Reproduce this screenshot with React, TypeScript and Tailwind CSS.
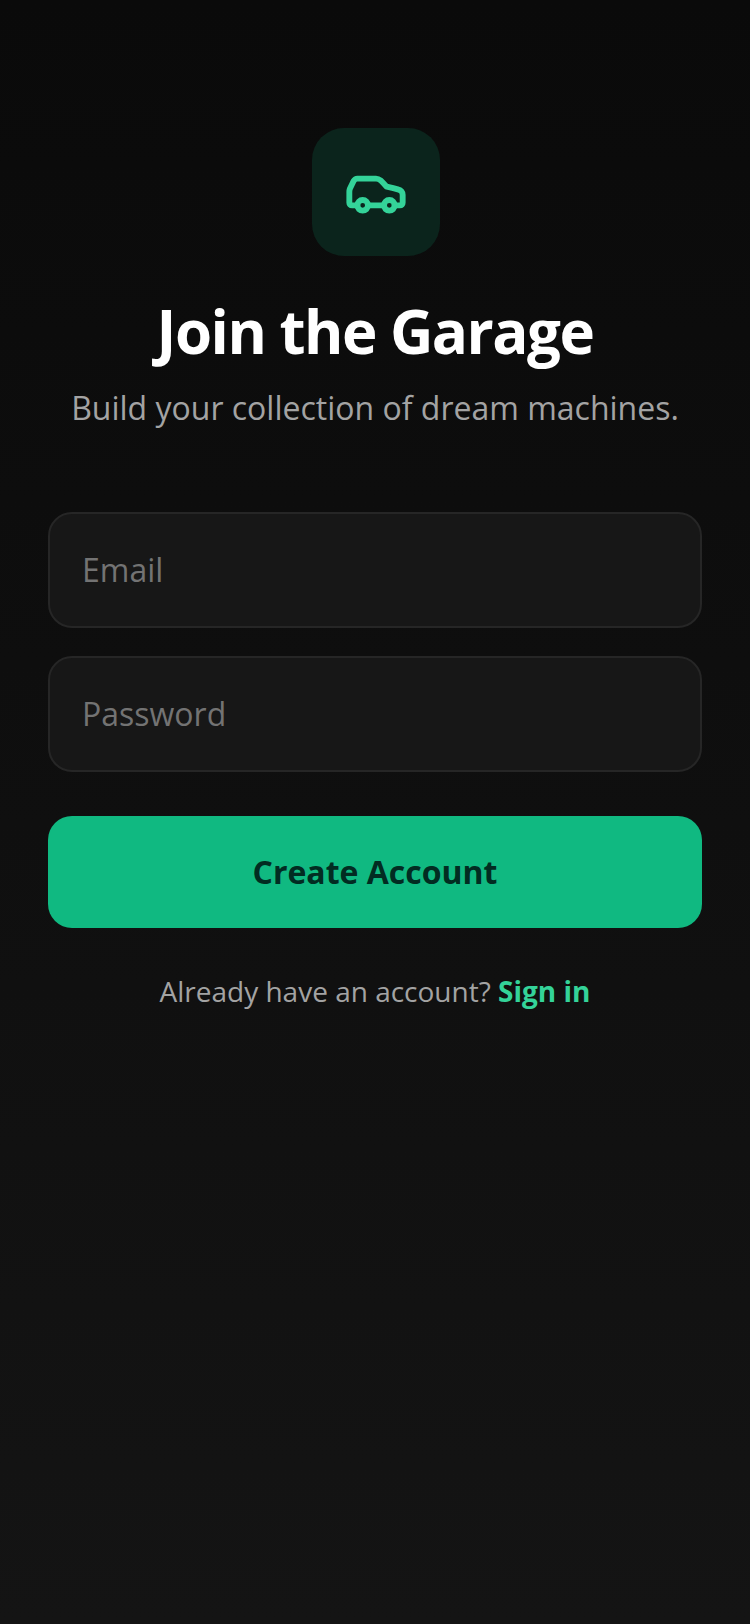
import { Car } from 'lucide-react'

export default function App() {
  return (
    <div className="min-h-[1624px] bg-gradient-to-b from-[#0a0a0a] to-[#141414] px-12 pt-32 font-['Open_Sans',sans-serif] antialiased">
      <div className="flex flex-col items-center">
        <div className="ml-[2px] flex h-32 w-32 items-center justify-center rounded-[32px] bg-[#0b241c]">
          <Car className="h-16 w-16 text-[#34d399]" strokeWidth={2.2} />
        </div>
        <h1 className="mt-[39px] text-[60px] leading-[72px] font-bold tracking-[-1.5px] text-white">
          Join the Garage
        </h1>
        <p className="mt-[19px] text-[32px] leading-[44px] text-[#a3a3a3]">
          Build your collection of dream machines.
        </p>
      </div>

      <form className="mt-[82px] flex flex-col">
        <input
          type="email"
          placeholder="Email"
          className="h-[116px] w-full rounded-3xl border-2 border-[#262626] bg-[#171717] px-8 pb-[2px] text-[32px] text-white placeholder:text-[#737373] focus:outline-none"
        />
        <input
          type="password"
          placeholder="Password"
          className="mt-7 h-[116px] w-full rounded-3xl border-2 border-[#262626] bg-[#171717] px-8 pb-[2px] text-[32px] text-white placeholder:text-[#737373] focus:outline-none"
        />
        <button
          type="button"
          className="mt-11 h-28 w-full rounded-3xl bg-[#10b981] text-[32px] font-bold text-[#022c22]"
        >
          Create Account
        </button>
      </form>

      <p className="mt-[43px] text-center text-[28px] leading-10 text-[#a3a3a3]">
        Already have an account?{' '}
        <a href="#" className="font-bold text-[#34d399]">
          Sign in
        </a>
      </p>
    </div>
  )
}
